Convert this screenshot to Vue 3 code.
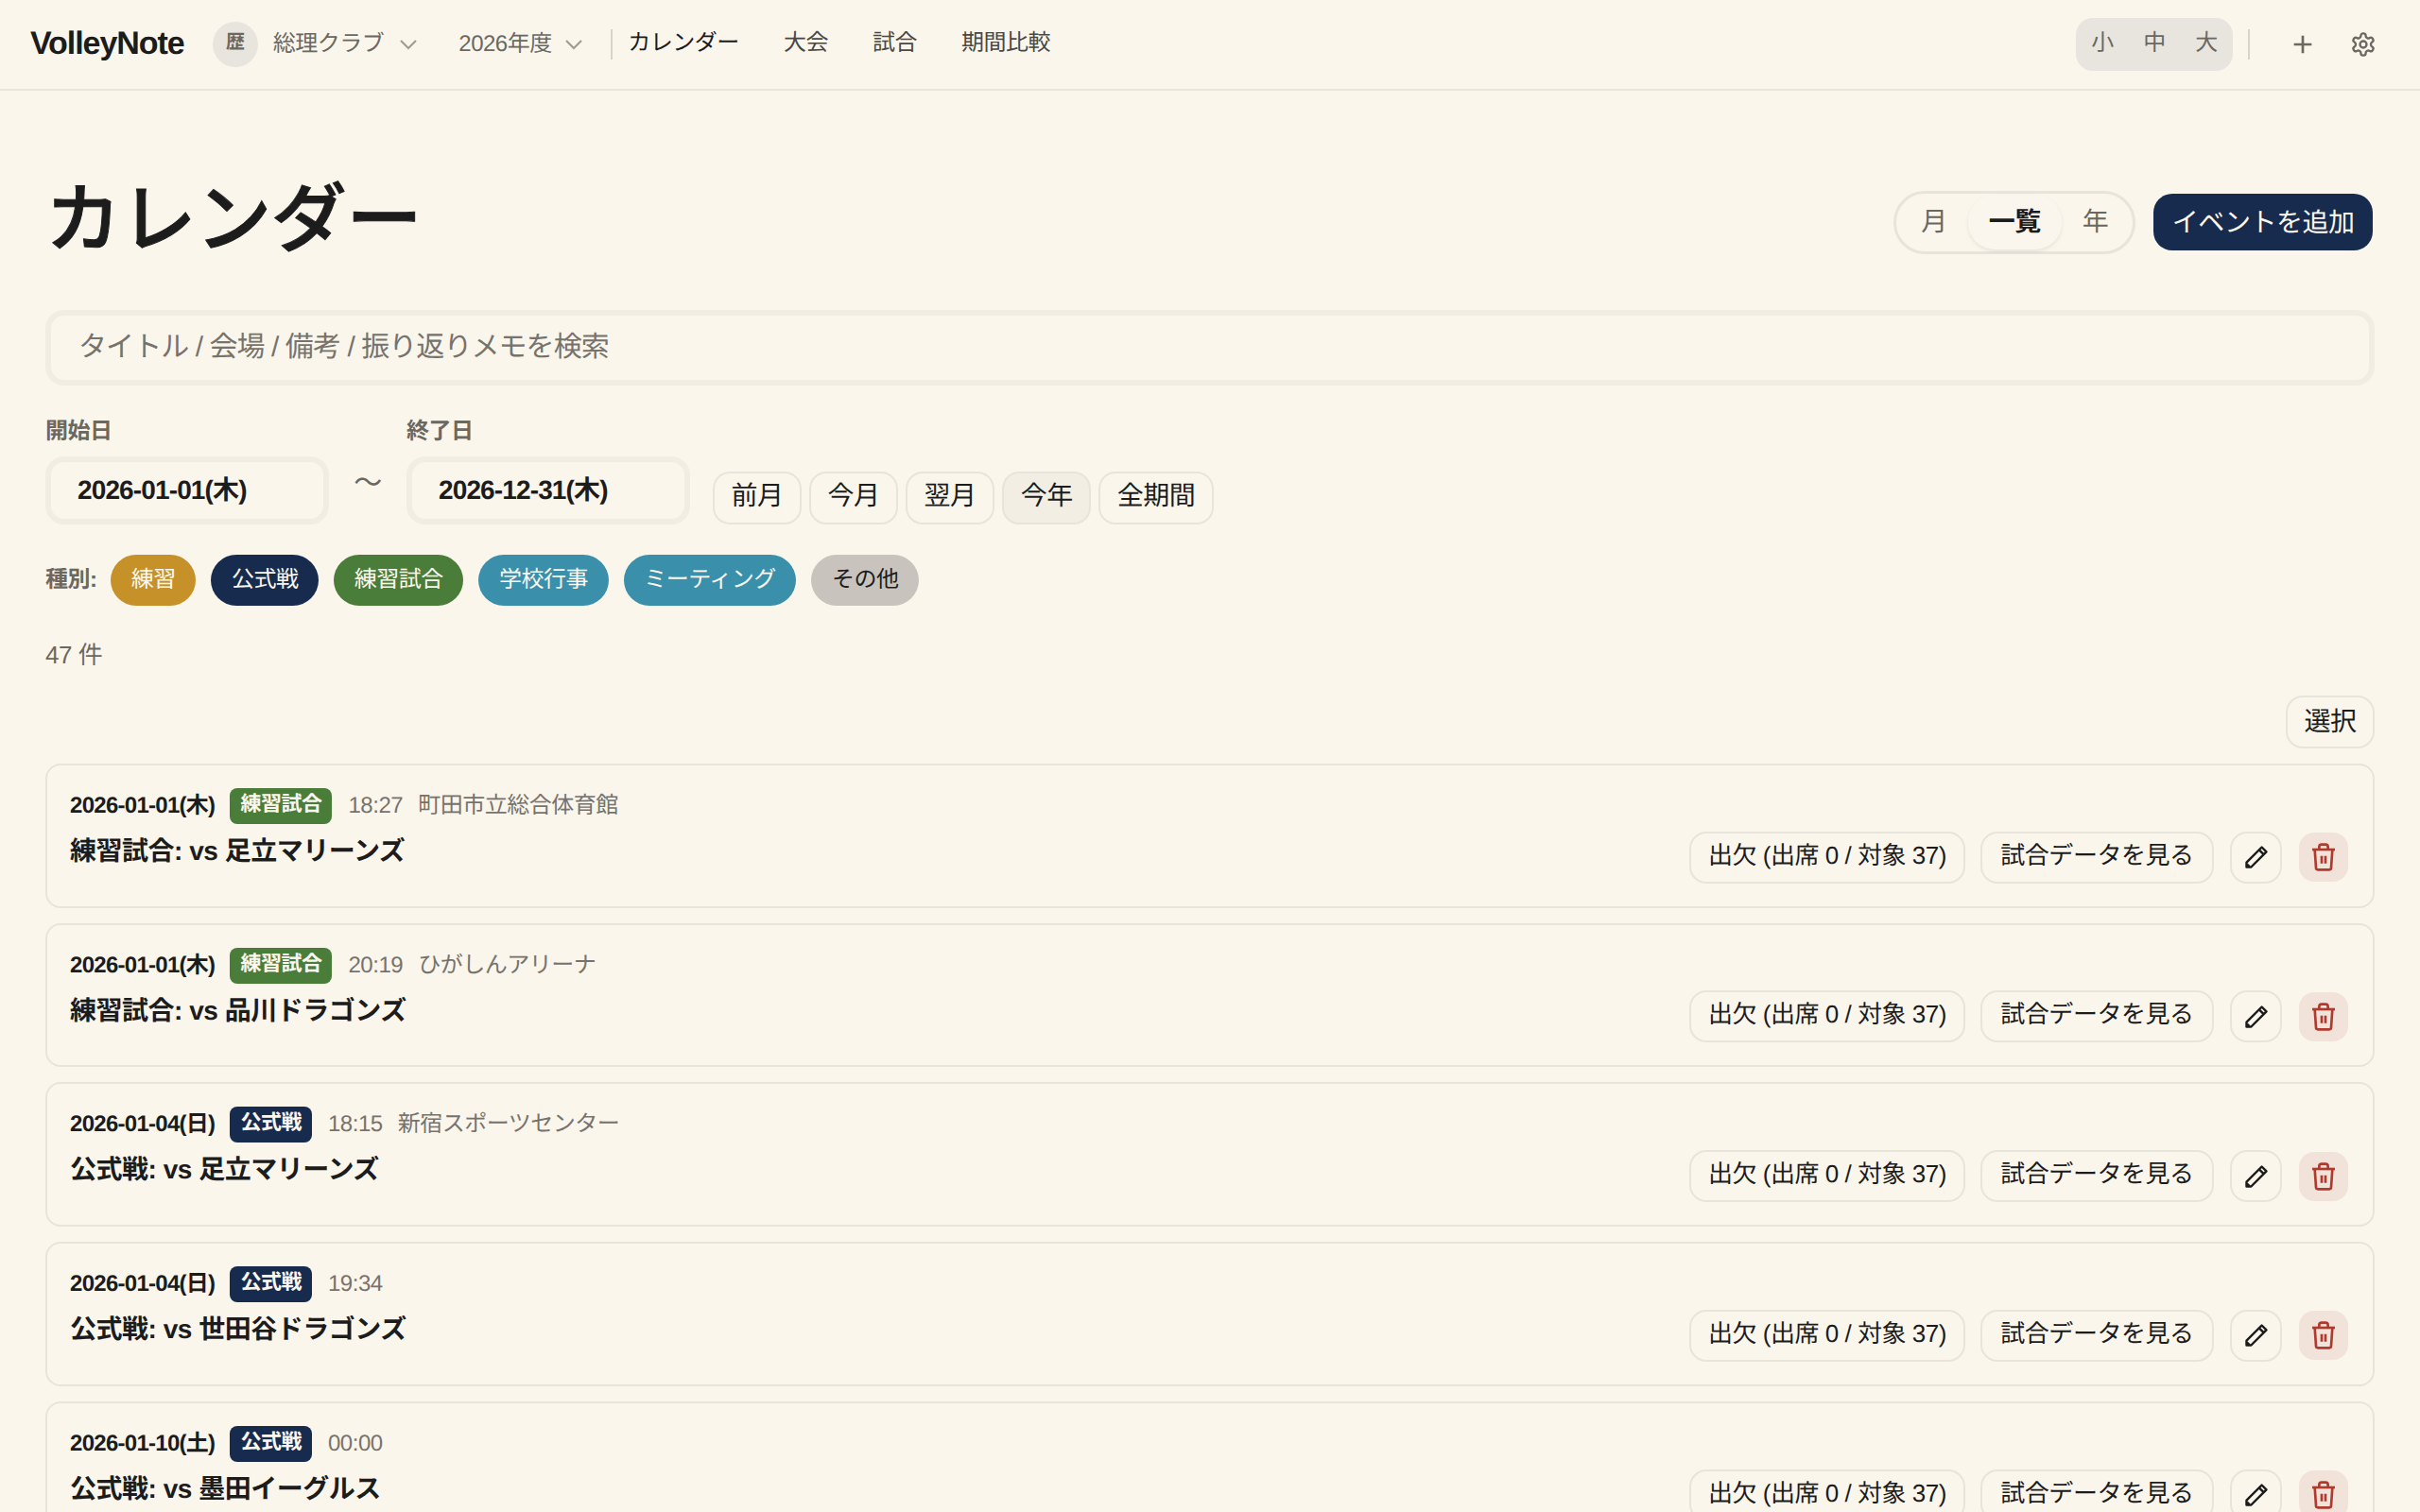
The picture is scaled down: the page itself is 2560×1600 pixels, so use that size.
<template>
  <div class="app-shell">
    <header class="topbar">
      <div class="brand">VolleyNote</div>
      <div class="club-avatar">歴</div>
      <button class="picker club-picker">
        総理クラブ
        <svg class="chevron" viewBox="0 0 24 24"><path d="m6 9 6 6 6-6" /></svg>
      </button>
      <button class="picker year-picker">
        2026年度
        <svg class="chevron" viewBox="0 0 24 24"><path d="m6 9 6 6 6-6" /></svg>
      </button>
      <span class="vline"></span>
      <nav class="nav">
        <a v-for="(item, i) in navItems" :key="item" :class="{ current: i === 0 }">{{ item }}</a>
      </nav>
      <div class="spacer"></div>
      <div class="size-switch">
        <span v-for="s in ['小', '中', '大']" :key="s">{{ s }}</span>
      </div>
      <span class="vline right-line"></span>
      <svg class="plus-icon" viewBox="0 0 24 24"><path d="M5 12h14M12 5v14" /></svg>
      <svg class="gear-icon" viewBox="0 0 24 24">
        <path d="M12.22 2h-.44a2 2 0 0 0-2 2v.18a2 2 0 0 1-1 1.73l-.43.25a2 2 0 0 1-2 0l-.15-.08a2 2 0 0 0-2.73.73l-.22.38a2 2 0 0 0 .73 2.73l.15.1a2 2 0 0 1 1 1.72v.51a2 2 0 0 1-1 1.74l-.15.09a2 2 0 0 0-.73 2.73l.22.38a2 2 0 0 0 2.73.73l.15-.08a2 2 0 0 1 2 0l.43.25a2 2 0 0 1 1 1.73V20a2 2 0 0 0 2 2h.44a2 2 0 0 0 2-2v-.18a2 2 0 0 1 1-1.73l.43-.25a2 2 0 0 1 2 0l.15.08a2 2 0 0 0 2.73-.73l.22-.39a2 2 0 0 0-.73-2.73l-.15-.08a2 2 0 0 1-1-1.74v-.5a2 2 0 0 1 1-1.74l.15-.09a2 2 0 0 0 .73-2.73l-.22-.38a2 2 0 0 0-2.73-.73l-.15.08a2 2 0 0 1-2 0l-.43-.25a2 2 0 0 1-1-1.73V4a2 2 0 0 0-2-2z" />
        <circle cx="12" cy="12" r="3" />
      </svg>
    </header>

    <main class="page">
      <div class="page-head">
        <h1>カレンダー</h1>
        <div class="head-actions">
          <div class="view-switch">
            <span>月</span>
            <span class="active">一覧</span>
            <span>年</span>
          </div>
          <button class="add-btn">イベントを追加</button>
        </div>
      </div>

      <input class="search" type="text" placeholder="タイトル / 会場 / 備考 / 振り返りメモを検索" />

      <div class="date-row">
        <div class="date-field">
          <label>開始日</label>
          <div class="date-input">2026-01-01(木)</div>
        </div>
        <span class="tilde">〜</span>
        <div class="date-field">
          <label>終了日</label>
          <div class="date-input">2026-12-31(木)</div>
        </div>
        <div class="shortcuts">
          <button v-for="r in ranges" :key="r" class="soft-btn range-btn" :class="{ selected: r === '今年' }">{{ r }}</button>
        </div>
      </div>

      <div class="kinds">
        <span class="kinds-label">種別:</span>
        <span v-for="k in kinds" :key="k.name" class="kind-chip" :class="k.cls">{{ k.name }}</span>
      </div>

      <p class="count">47 件</p>

      <div class="select-row">
        <button class="soft-btn">選択</button>
      </div>

      <div class="event-list">
        <article v-for="ev in events" :key="ev.title + ev.time" class="event-card">
          <div class="event-main">
            <div class="event-meta">
              <span class="event-date">{{ ev.date }}</span>
              <span class="event-tag" :class="ev.cls">{{ ev.kind }}</span>
              <span class="event-time">{{ ev.time }}</span>
              <span v-if="ev.venue" class="event-venue">{{ ev.venue }}</span>
            </div>
            <div class="event-title">{{ ev.title }}</div>
          </div>
          <div class="event-actions">
            <button class="pill-btn attend-btn">出欠 (出席 0 / 対象 37)</button>
            <button class="pill-btn">試合データを見る</button>
            <button class="pill-btn icon-btn">
              <svg viewBox="0 0 24 24">
                <path d="M3 21v-4.2L16.8 3 21 7.2 7.2 21z" />
                <path d="M14.4 5.4l4.2 4.2" />
                <path d="M3.5 18.5l2 2" />
              </svg>
            </button>
            <button class="trash-btn">
              <svg viewBox="0 0 24 24">
                <path d="M3 6h18" />
                <path d="M5 6l1 14.5a1.5 1.5 0 0 0 1.5 1.5h9a1.5 1.5 0 0 0 1.5-1.5L19 6" />
                <path d="M8.5 6V4a2 2 0 0 1 2-2h3a2 2 0 0 1 2 2v2" />
                <path d="M10.5 11v6M13.5 11v6" />
              </svg>
            </button>
          </div>
        </article>
      </div>
    </main>
  </div>
</template>

<script setup>
const navItems = ['カレンダー', '大会', '試合', '期間比較']
const ranges = ['前月', '今月', '翌月', '今年', '全期間']

const kinds = [
  { name: '練習', cls: 'k-practice' },
  { name: '公式戦', cls: 'k-official' },
  { name: '練習試合', cls: 'k-friendly' },
  { name: '学校行事', cls: 'k-school' },
  { name: 'ミーティング', cls: 'k-school' },
  { name: 'その他', cls: 'k-other' }
]

const events = [
  { date: '2026-01-01(木)', kind: '練習試合', cls: 'k-friendly', time: '18:27', venue: '町田市立総合体育館', title: '練習試合: vs 足立マリーンズ' },
  { date: '2026-01-01(木)', kind: '練習試合', cls: 'k-friendly', time: '20:19', venue: 'ひがしんアリーナ', title: '練習試合: vs 品川ドラゴンズ' },
  { date: '2026-01-04(日)', kind: '公式戦', cls: 'k-official', time: '18:15', venue: '新宿スポーツセンター', title: '公式戦: vs 足立マリーンズ' },
  { date: '2026-01-04(日)', kind: '公式戦', cls: 'k-official', time: '19:34', venue: '', title: '公式戦: vs 世田谷ドラゴンズ' },
  { date: '2026-01-10(土)', kind: '公式戦', cls: 'k-official', time: '00:00', venue: '', title: '公式戦: vs 墨田イーグルス' }
]
</script>

<style>
html,
body {
  margin: 0;
  background: #faf6ec;
  overflow: hidden;
}
</style>

<style scoped>
.app-shell {
  height: 1600px;
  overflow: hidden;
  background: #faf6ec;
  color: #1c1c1c;
  font-family: "Liberation Sans", "Noto Sans CJK JP", sans-serif;
  letter-spacing: -0.03em;
  line-height: 1.5;
  text-rendering: geometricPrecision;
}

button,
input {
  font-family: inherit;
  letter-spacing: inherit;
  line-height: inherit;
  text-rendering: inherit;
}

/* top bar */
.topbar {
  display: flex;
  align-items: center;
  height: 94px;
  padding: 0 32px;
  border-bottom: 2px solid #e8e4dc;
}

.brand {
  margin-bottom: 2px;
  font-size: 34px;
  font-weight: 700;
  letter-spacing: -0.031em;
}

.club-avatar {
  display: flex;
  align-items: center;
  justify-content: center;
  box-sizing: border-box;
  width: 48px;
  height: 48px;
  margin-left: 30px;
  padding-bottom: 5px;
  border-radius: 50%;
  background: #e8e5df;
  color: #6b6862;
  font-size: 20px;
  font-weight: 700;
}

.picker {
  display: flex;
  align-items: center;
  gap: 18px;
  padding: 0;
  border: none;
  background: none;
  color: #6b6862;
  font-size: 24px;
}

.club-picker {
  margin-left: 16px;
}

.year-picker {
  gap: 15px;
  margin-left: 45px;
}

.chevron {
  width: 32px;
  height: 32px;
  margin: 0 -8px;
  fill: none;
  stroke: #a09c94;
  stroke-width: 1.6;
}

.vline {
  width: 2px;
  height: 32px;
  margin-left: 31px;
  background: #d8d4cc;
}

.nav {
  display: flex;
  gap: 47px;
  margin-bottom: 2px;
  margin-left: 16.5px;
}

.nav a {
  color: #4a4844;
  font-size: 24px;
}

.nav a.current {
  color: #1c1c1c;
}

.spacer {
  flex: 1;
}

.size-switch {
  display: flex;
  align-items: center;
  height: 56px;
  padding: 0 0.5px;
  border-radius: 18px;
  background: #e8e5df;
  color: #6b6862;
  font-size: 24px;
}

.size-switch span {
  width: 55px;
  margin-top: -3px;
  text-align: center;
}

.right-line {
  margin-left: 16px;
}

.plus-icon {
  width: 32px;
  height: 32px;
  margin-left: 40px;
  fill: none;
  stroke: #6b6862;
  stroke-width: 2;
}

.gear-icon {
  width: 28px;
  height: 28px;
  margin-left: 34px;
  margin-right: 14px;
  fill: none;
  stroke: #6b6862;
  stroke-width: 2;
}

/* page */
.page {
  padding: 88px 48px 0;
}

.page-head {
  display: flex;
  align-items: center;
  justify-content: space-between;
  margin-bottom: 48px;
}

h1 {
  margin: 0;
  padding-top: 1px;
  height: 96px;
  box-sizing: border-box;
  font-size: 80px;
  font-weight: 500;
  letter-spacing: -0.005em;
  line-height: 96px;
  -webkit-text-stroke: 1px #1c1c1c;
}

.head-actions {
  display: flex;
  align-items: center;
  gap: 19px;
  margin-top: 6px;
  margin-right: 2px;
}

.view-switch {
  display: flex;
  align-items: center;
  height: 67px;
  padding: 0 4px;
  box-sizing: border-box;
  border: 3px solid #e8e4dc;
  border-radius: 34px;
  color: #6b6862;
  font-size: 28px;
}

.view-switch span {
  padding: 0 22px;
  line-height: 58px;
}

.view-switch .active {
  border-radius: 28px;
  background: #faf6ee;
  box-shadow: 0 2px 4px rgba(0, 0, 0, 0.08);
  color: #1c1c1c;
  font-weight: 700;
}

.add-btn {
  height: 60px;
  padding: 2px 19.5px 0;
  border: none;
  border-radius: 20px;
  background: #172b4f;
  color: #fbf7ee;
  font-size: 28px;
}

.search {
  display: block;
  box-sizing: border-box;
  width: 100%;
  height: 80px;
  padding: 0 29px;
  border: 6px solid #f1ede3;
  border-radius: 20px;
  outline: none;
  background: #faf6ec;
  color: #1c1c1c;
  font-size: 30px;
  letter-spacing: -0.031em;
}

.search::placeholder {
  color: #77736c;
}

.date-row {
  display: flex;
  align-items: flex-end;
  margin-top: 31px;
}

.date-field label {
  display: block;
  margin-bottom: 8px;
  color: #6b6862;
  font-size: 24px;
  font-weight: 700;
}

.date-input {
  display: flex;
  align-items: center;
  box-sizing: border-box;
  width: 300px;
  height: 72px;
  padding: 0 28px 1px;
  border: 6px solid #f1ede3;
  border-radius: 20px;
  font-size: 28px;
  font-weight: 700;
  letter-spacing: -0.031em;
}

.tilde {
  width: 82px;
  margin-bottom: 21px;
  color: #6b6862;
  font-size: 30px;
  text-align: center;
}

.shortcuts {
  display: flex;
  gap: 8px;
  margin-left: 24px;
}

.soft-btn {
  height: 56px;
  padding: 0 17.5px;
  border: 2px solid #e8e4dc;
  border-radius: 18px;
  background: none;
  color: #1c1c1c;
  font-size: 28px;
}

.range-btn {
  padding-bottom: 5px;
}

.soft-btn.selected {
  background: #f2eee3;
}

.kinds {
  display: flex;
  align-items: center;
  gap: 16px;
  margin-top: 32px;
}

.kinds-label {
  margin-right: -1.5px;
  margin-bottom: 1px;
  color: #6b6862;
  font-size: 24px;
  font-weight: 700;
}

.kind-chip {
  height: 54px;
  padding: 0 21.6px;
  border-radius: 27px;
  color: #fbf7ee;
  font-size: 24px;
  line-height: 54px;
}

.k-practice {
  background: #c59128;
}

.k-official {
  background: #172b4f;
}

.k-friendly {
  background: #4a7c3a;
}

.k-school {
  background: #3a8fab;
}

.k-other {
  background: #c8c4bd;
  color: #1c1c1c;
}

.count {
  margin: 33px 0 0;
  color: #6b6862;
  font-size: 26px;
}

.select-row {
  display: flex;
  justify-content: flex-end;
  margin-top: 22.75px;
}

/* event cards */
.event-list {
  display: flex;
  flex-direction: column;
  gap: 16px;
  margin-top: 16px;
}

.event-card {
  display: flex;
  align-items: flex-end;
  justify-content: space-between;
  height: 152.75px;
  box-sizing: border-box;
  padding: 24px 26px 24px 24px;
  border: 2px solid #e8e4dc;
  border-radius: 16px;
}

.event-main {
  align-self: flex-start;
}

.event-meta {
  display: flex;
  align-items: center;
  gap: 16px;
  height: 38px;
  font-size: 24px;
}

.event-date {
  font-weight: 700;
  letter-spacing: -0.03em;
}

.event-tag {
  display: flex;
  align-items: center;
  height: 38px;
  padding: 0 11px 5px;
  box-sizing: border-box;
  border-radius: 8px;
  color: #fbf7ee;
  font-size: 22px;
  font-weight: 700;
}

.event-time {
  margin-left: 1px;
  color: #77736c;
}

.event-venue {
  color: #77736c;
}

.event-title {
  margin-top: 8px;
  font-size: 28px;
  font-weight: 700;
}

.event-actions {
  display: flex;
  align-items: center;
  gap: 16px;
}

.pill-btn {
  height: 55px;
  padding: 0 19.5px 4px;
  border: 2px solid #e8e4dc;
  border-radius: 18px;
  background: none;
  color: #1c1c1c;
  font-size: 26px;
}

.attend-btn {
  padding: 0 18px 4px;
}

.icon-btn {
  display: flex;
  align-items: center;
  justify-content: center;
  width: 55px;
  margin-left: 1px;
  padding: 0;
}

.icon-btn svg {
  width: 28px;
  height: 28px;
  fill: none;
  stroke: #1c1c1c;
  stroke-width: 2.1;
  stroke-linejoin: round;
}

.trash-btn {
  display: flex;
  align-items: center;
  justify-content: center;
  width: 52px;
  height: 52px;
  margin-left: 2px;
  padding: 0;
  border: none;
  border-radius: 16px;
  background: #f2e3da;
}

.trash-btn svg {
  width: 32px;
  height: 32px;
  fill: none;
  stroke: #b03a2e;
  stroke-width: 2;
}
</style>
